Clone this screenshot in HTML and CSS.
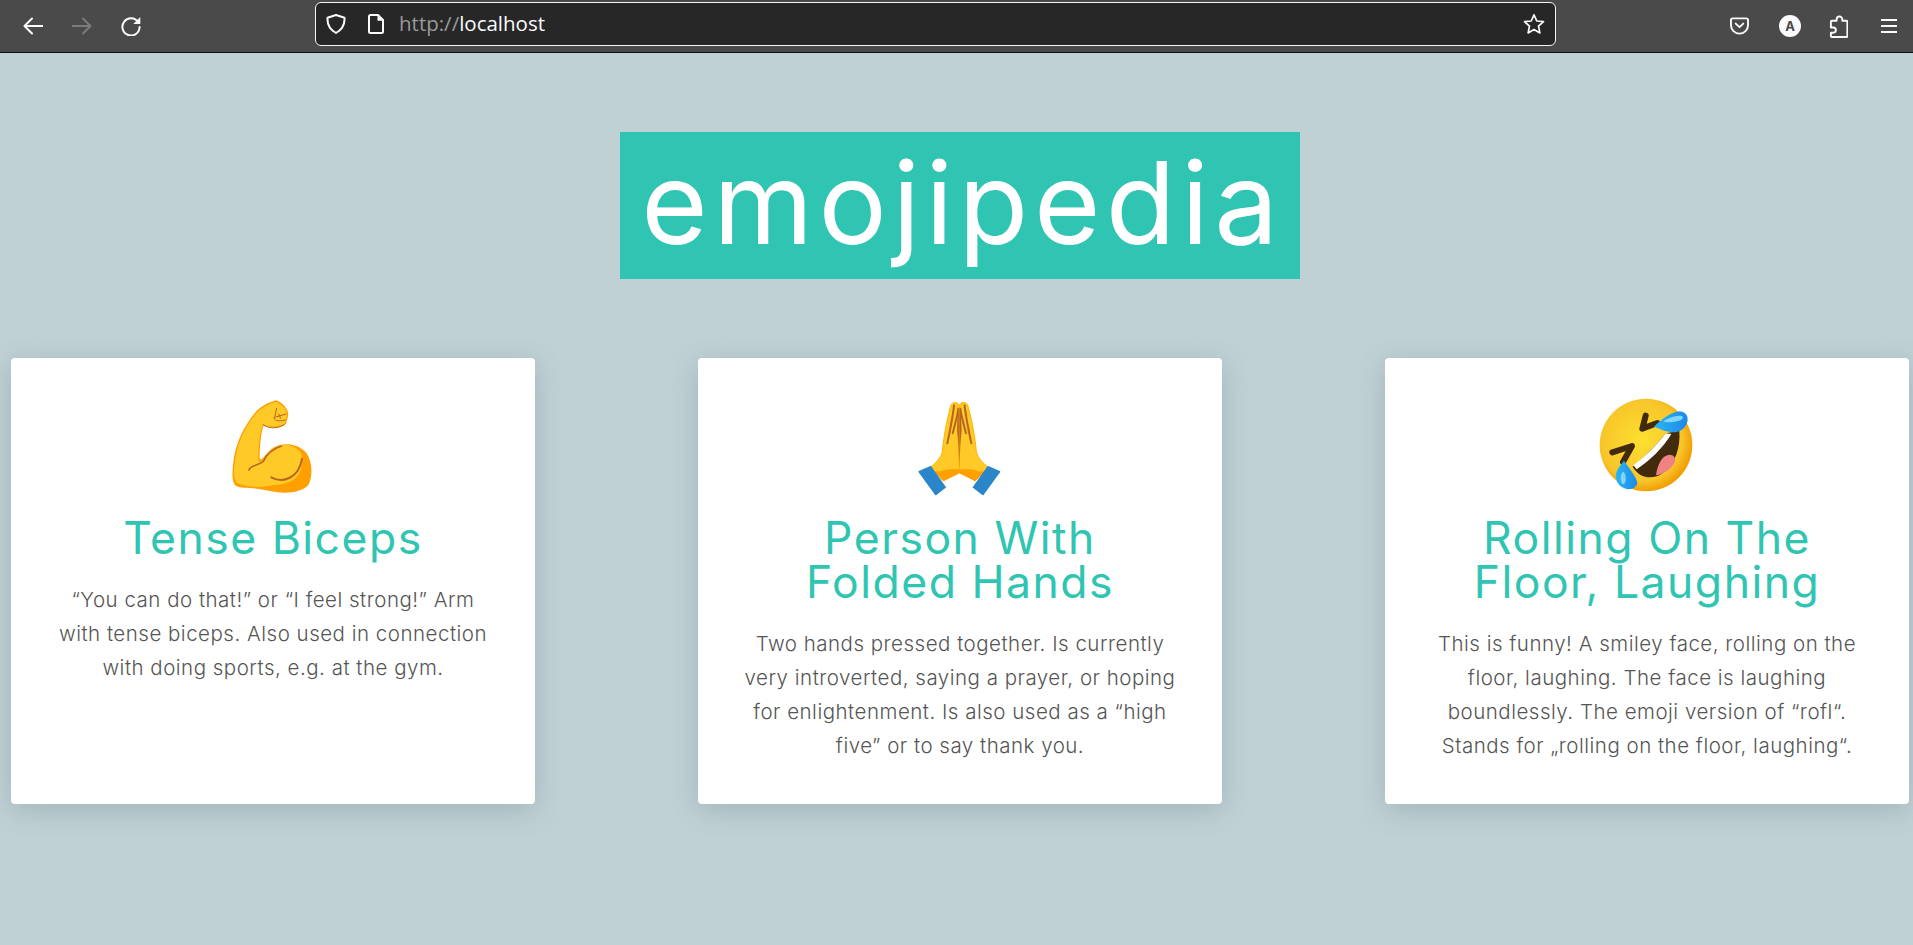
FILE: index.html
```html
<!DOCTYPE html>
<html lang="en">
<head>
<meta charset="utf-8">
<title>Emojipedia</title>
<link rel="stylesheet" href="styles.css">
</head>
<body>
<header class="toolbar">
  <div class="nav">
    <svg class="icon" viewBox="0 0 20 20"><path d="M19.5 10H1.5M9 2.5 1.5 10 9 17.5"/></svg>
    <svg class="icon dim" viewBox="0 0 20 20"><path d="M.5 10h18M11 2.5l7.5 7.5-7.5 7.5"/></svg>
    <svg class="icon" viewBox="0 0 20 20"><path d="M17.2 6.2A8.6 8.6 0 1 0 18.6 11"/><path class="solid" d="M19.3 1v7h-7z"/></svg>
  </div>
  <div class="urlbar">
    <svg class="icon" viewBox="0 0 20 20"><path d="M10 1 18.5 3.8c.4 6.6-2 11.6-8.5 15.2C3.500 15.400 1.100 10.400 1.500 3.800z"/></svg>
    <svg class="icon page" viewBox="0 0 20 20"><path d="M3 2.500a1.500 1.500 0 0 1 1.500-1.500H12l5 5v11.500a1.500 1.500 0 0 1-1.500 1.500h-11A1.500 1.500 0 0 1 3 17.500z"/><path class="solid" d="M11.500 1 17 6.800h-5.500z"/></svg>
    <span class="url"><span class="scheme">http://</span>localhost</span>
    <svg class="icon star" viewBox="0 0 22 22"><path d="M11 1.800 13.800 8l6.700.7-5 4.500 1.400 6.700L11 16.500 5.100 19.900l1.400-6.700-5-4.500L8.200 8z"/></svg>
  </div>
  <div class="tools">
    <svg class="icon pocket" viewBox="0 0 20 20"><path d="M3 2h14a2 2 0 0 1 2 2v5a9 9 0 0 1-18 0V4a2 2 0 0 1 2-2z"/><path d="M6 7.500 10 11.200 14 7.500"/></svg>
    <span class="avatar">A</span>
    <svg class="icon puzzle" viewBox="0 0 20 24"><path d="M8 6V4.500a3 3 0 1 1 6 0V6h4.500a.8.800 0 0 1 .8.800v15.400a.8.800 0 0 1-.8.800H3a1 1 0 0 1-1-1v-3.500h2.500a2.500 2.500 0 0 0 0-5.500H2V7a1 1 0 0 1 1-1z"/></svg>
    <svg class="icon menu" viewBox="0 0 16 14"><path d="M0 1h16M0 7h16M0 13h16"/></svg>
  </div>
</header>
<main class="page-body">
  <h1 class="brand">emojipedia</h1>
  <section class="cards">
    <article class="card">
      <svg class="emoji" viewBox="9 0 420 360">
        <path fill="#ffa000" d="M228 31C245 35 263 55 265 72 264 85 259 92 259 100 250 113 225 118 191 106 183 125 179 170 179 205 184 216 190 198 215 176 240 158 290 155 320 190 336 215 340 255 325 285 300 311 250 313 200 301 160 291 125 297 110 289 96 281 96 255 99 225 104 170 125 115 170 62 190 45 210 35 228 31z"/>
        <path fill="#ffca28" d="M228 35C243 40 259 56 261 72 260 85 255 92 255 98 245 110 222 115 188 102 180 125 174 170 175 212 185 222 192 204 218 176 240 160 285 158 304 192 312 225 302 262 268 276 240 286 222 284 205 288 175 294 130 288 112 280 101 268 100 240 104 220 110 170 128 118 172 66 190 50 210 40 228 35z"/>
        <g fill="none" stroke="#b8661e" stroke-linecap="round" stroke-linejoin="round">
          <path stroke-width="5" d="M147 240C150 226 172 228 190 214 200 192 220 176 244 168"/>
          <path stroke-width="6" d="M214 262C250 282 298 262 306 206"/>
          <path stroke-width="3" d="M230 55 224 82 258 72M222 82C222 92 232 96 256 90M236 72 242 85M190 105C205 115 232 118 252 104"/>
        </g>
      </svg>
      <h3 class="name">Tense Biceps</h3>
      <p class="desc">“You can do that!” or “I feel strong!” Arm<br>with tense biceps. Also used in connection<br>with doing sports, e.g. at the gym.</p>
    </article>
    <article class="card">
      <svg class="emoji" viewBox="0 0 420 360">
        <defs>
          <g id="hand">
            <path fill="#ffca28" stroke="#ffb300" stroke-width="3" d="M208 248 160 272 120 232C135 222 152 205 157 185 160 150 168 100 182 48 186 35 200 35 205 42L208 46z"/>
            <path fill="#ffa000" d="M208 236 208 250 160 274 132 244C150 246 162 240 175 238 190 236 200 240 208 236z"/>
            <path fill="none" stroke="#b8661e" stroke-width="6" stroke-linecap="round" d="M192 46C190 75 180 120 172 160M205 56C202 80 194 105 188 130"/>
            <path fill="#b8661e" d="M203 70 208 60 208 235 205 165 201 120z"/>
            <path fill="#2a86c8" stroke="#2a86c8" stroke-width="4" stroke-linejoin="round" d="M87 245 122 230 166 292 137 314z"/>
          </g>
        </defs>
        <use href="#hand"/>
        <use href="#hand" transform="matrix(-1 0 0 1 416 0)"/>
      </svg>
      <h3 class="name">Person With<br>Folded Hands</h3>
      <p class="desc">Two hands pressed together. Is currently<br>very introverted, saying a prayer, or hoping<br>for enlightenment. Is also used as a “high<br>five” or to say thank you.</p>
    </article>
    <article class="card">
      <svg class="emoji" viewBox="-9 0 420 360">
        <defs>
          <radialGradient id="face" cx="0.45" cy="0.45" r="0.55">
            <stop offset="0" stop-color="#fde030"/>
            <stop offset="0.8" stop-color="#f7c52a"/>
            <stop offset="1" stop-color="#f29f05"/>
          </radialGradient>
          <linearGradient id="drop" x1="0" y1="0" x2="1" y2="0">
            <stop offset="0" stop-color="#29b6f6"/>
            <stop offset="1" stop-color="#1e88e5"/>
          </linearGradient>
        </defs>
        <circle cx="198" cy="165" r="139" fill="url(#face)"/>
        <path fill="#422b0d" d="M158 230C195 200 230 165 258 130L298 122C302 175 285 220 250 248 222 268 182 270 158 230z"/>
        <path fill="#fff" d="M160 226C195 200 230 165 258 130L274 132C250 172 210 212 170 238z"/>
        <path fill="#ef8282" d="M228 256C232 225 245 196 268 194 282 194 288 204 284 218 270 240 250 252 228 256z"/>
        <g fill="none" stroke="#422b0d" stroke-width="18" stroke-linecap="round" stroke-linejoin="round">
          <path d="M197 77 187 116 232 99"/>
          <path d="M97 187 156 168 129 216"/>
        </g>
        <path fill="url(#drop)" d="M222 110C245 88 275 65 300 64 318 66 326 80 322 95 316 118 295 130 272 126 255 124 238 116 222 110z"/>
        <path fill="#81d4fa" d="M250 94C265 84 290 74 305 78 312 82 308 90 298 92 282 96 262 100 250 94z"/>
        <path fill="url(#drop)" d="M132 212C148 235 172 265 172 280 170 292 155 300 140 297 118 292 105 275 108 250 112 235 124 222 132 212z"/>
        <path fill="#81d4fa" d="M128 245C120 255 120 275 128 283 134 284 138 275 137 262 136 252 133 245 128 245z"/>
      </svg>
      <h3 class="name">Rolling On The<br>Floor, Laughing</h3>
      <p class="desc">This is funny! A smiley face, rolling on the<br>floor, laughing. The face is laughing<br>boundlessly. The emoji version of “rofl“.<br>Stands for „rolling on the floor, laughing“.</p>
    </article>
  </section>
</main>
</body>
</html>
```
FILE: styles.css
```css
* { box-sizing: border-box; }
html, body { margin: 0; height: 100%; overflow: hidden; }
body { background: #c0d1d5; font-family: "Inter", "Liberation Sans", sans-serif; }

.toolbar {
  display: flex;
  align-items: center;
  height: 53px;
  background: #4a4a4a;
  border-bottom: 1px solid #0c0c0c;
}
.icon {
  display: block;
  width: 20px;
  height: 20px;
  fill: none;
  stroke: #fbfbfe;
  stroke-width: 2;
  stroke-linecap: round;
  stroke-linejoin: round;
  flex: none;
}
.icon .solid { fill: #fbfbfe; stroke: none; }
.icon.dim { stroke: #7b7b7b; }
.nav { display: flex; gap: 29px; padding-left: 23px; width: 315px; }
.urlbar {
  display: flex;
  align-items: center;
  width: 1241px;
  height: 44px;
  margin-top: -5px;
  padding: 0 10px;
  background: #272727;
  border: 1.500px solid #f4f4f6;
  border-radius: 6px;
}
.page { margin-left: 20px; }
.url { margin-left: 13px; font: 400 20.500px/1 "Open Sans", "Noto Sans", sans-serif; color: #fbfbfe; }
.scheme { color: #9a9a9a; }
.star { margin-left: auto; width: 22px; height: 22px; stroke-width: 1.700; }
.tools { display: flex; align-items: center; margin-left: 174px; }
.pocket { margin-right: 30px; width: 19px; }
.avatar {
  display: flex;
  align-items: center;
  justify-content: center;
  width: 22px;
  height: 22px;
  border-radius: 50%;
  background: #fbfbfe;
  color: #4a4a4a;
  font: 700 13px/1 "Inter", sans-serif;
  margin-right: 28px;
}
.puzzle { width: 19px; height: 23px; margin-right: 33px; }
.menu { width: 16px; height: 14px; }

.page-body { padding: 79px 4px 0 11px; }
.brand {
  width: 680px;
  height: 147px;
  margin: 0 auto 79px;
  padding-left: 5px;
  background: #30c5b2;
  color: #fff;
  font-size: 114px;
  font-weight: 400;
  line-height: 142px;
  text-align: center;
  letter-spacing: 5.500px;
}
.cards { display: flex; justify-content: space-between; }
.card {
  display: flex;
  flex-direction: column;
  align-items: center;
  width: 524px;
  height: 446px;
  padding-top: 32px;
  background: #fff;
  border-radius: 4px;
  box-shadow: 0 6px 28px rgba(60, 90, 100, 0.24);
}
.emoji { display: block; width: 140px; height: 120px; }
.name {
  margin: 0;
  padding-top: 6px;
  color: #30c5b2;
  font-size: 44.500px;
  font-weight: 400;
  line-height: 44px;
  text-align: center;
  letter-spacing: 1.500px;
}
.desc {
  margin: 23px 0 0;
  color: #555;
  font-size: 20.500px;
  font-weight: 300;
  line-height: 34px;
  text-align: center;
  letter-spacing: 0.500px;
  white-space: nowrap;
}
```
